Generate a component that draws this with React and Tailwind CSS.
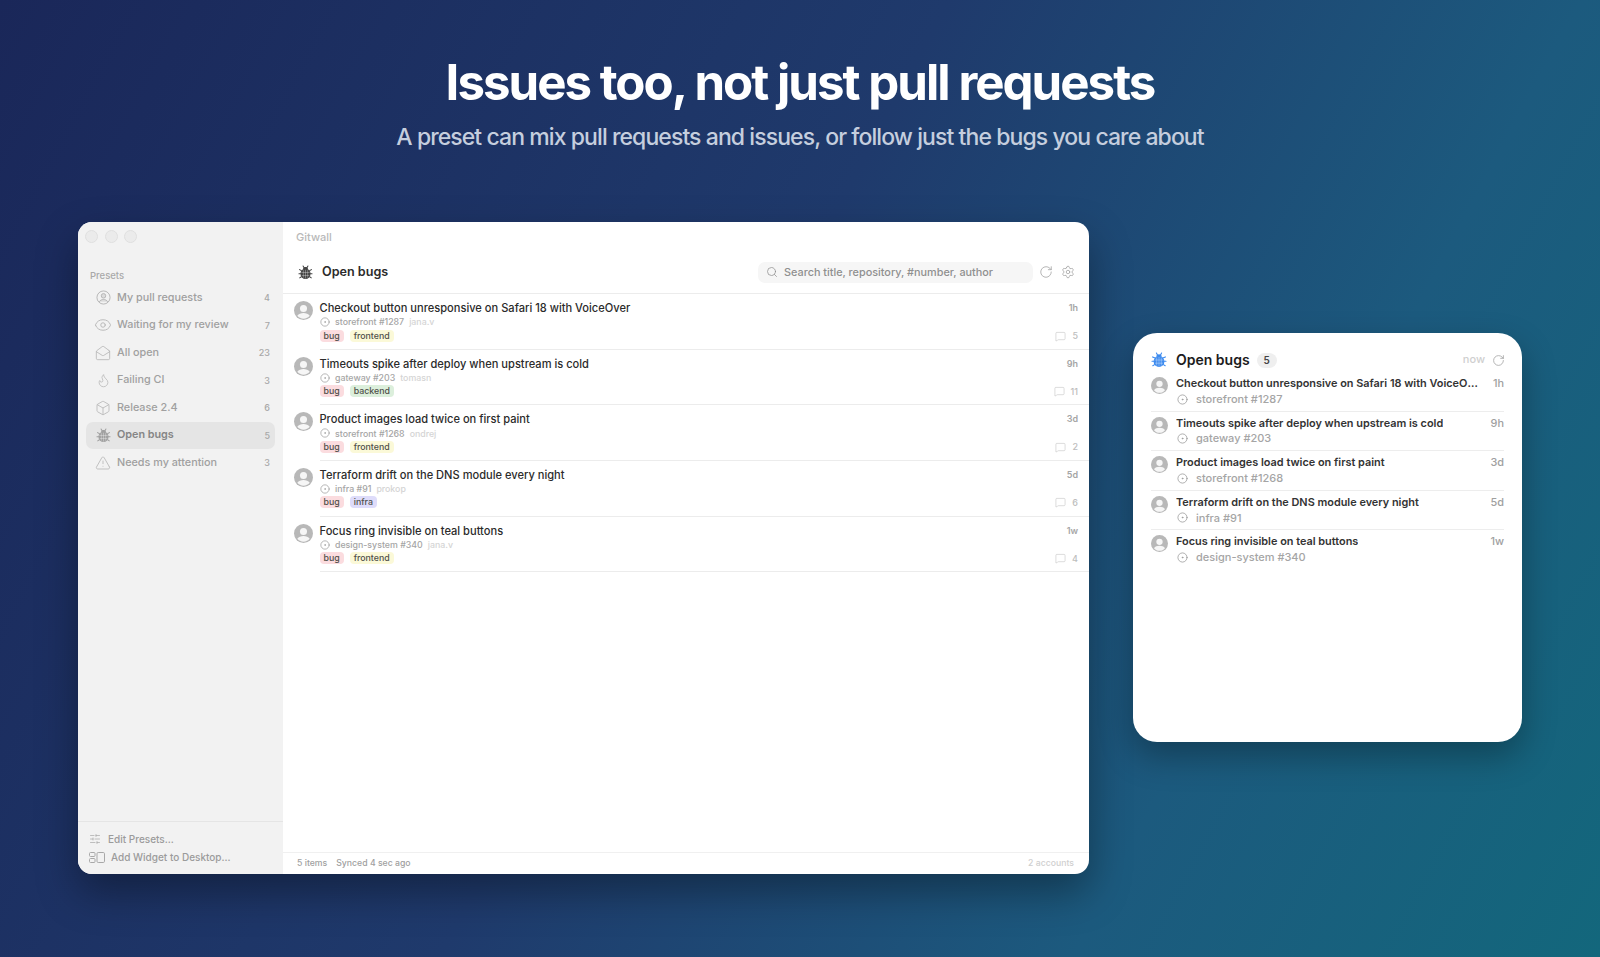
import {
  Box,
  CircleDot,
  Eye,
  Flame,
  MailOpen,
  MessageSquare,
  RotateCw,
  Search,
  Settings,
  SlidersHorizontal,
  TriangleAlert,
} from "lucide-react";

const issues = [
  { title: "Checkout button unresponsive on Safari 18 with VoiceOver", ref: "storefront #1287", author: "jana.v", time: "1h", comments: 5, tag: "frontend" },
  { title: "Timeouts spike after deploy when upstream is cold", ref: "gateway #203", author: "tomasn", time: "9h", comments: 11, tag: "backend" },
  { title: "Product images load twice on first paint", ref: "storefront #1268", author: "ondrej", time: "3d", comments: 2, tag: "frontend" },
  { title: "Terraform drift on the DNS module every night", ref: "infra #91", author: "prokop", time: "5d", comments: 6, tag: "infra" },
  { title: "Focus ring invisible on teal buttons", ref: "design-system #340", author: "jana.v", time: "1w", comments: 4, tag: "frontend" },
];

const tagStyles = {
  frontend: "bg-[#fbf9d8]",
  backend: "bg-[#dcefdc]",
  infra: "bg-[#dedcfa]",
};

const Avatar = ({ className }) => (
  <svg viewBox="0 0 20 20" className={className}>
    <defs>
      <clipPath id="avatar-clip">
        <circle cx="10" cy="10" r="10" />
      </clipPath>
    </defs>
    <circle cx="10" cy="10" r="10" fill="#b8b8b8" />
    <g clipPath="url(#avatar-clip)" fill="#f6f6f6">
      <circle cx="10" cy="8" r="3.7" />
      <path d="M3.5 15.6c1.4-2 3.8-2.9 6.5-2.9s5.100.9 6.500 2.900c-1.500 1.900-3.900 3-6.500 3s-5-1.100-6.500-3z" />
    </g>
  </svg>
);

const BugIcon = ({ className }) => (
  <svg viewBox="0 0 16 16" className={className} fill="currentColor" stroke="currentColor">
    <path fill="none" strokeWidth="1.100" strokeLinecap="round" d="M5.400 1l1.100 2M10.600 1L9.500 3M3.500 5.800L1.600 4.900M12.500 5.800l1.900-.9M3 9.300H1M13 9.300h2M3.600 12.600l-1.800 1.100M12.400 12.600l1.800 1.100" />
    <path stroke="none" d="M5.200 4.400C5.500 2.900 6.600 2.200 8 2.200s2.500.7 2.800 2.200z" />
    <ellipse cx="8" cy="9.400" rx="5.400" ry="5.600" stroke="none" />
    <path d="M8 5v9.500M3.500 8h9M4 11.200h8M5.700 5.500v8M10.300 5.500v8" stroke="#fff" strokeOpacity=".55" strokeWidth=".6" fill="none" />
  </svg>
);

const PersonIcon = ({ className }) => (
  <svg viewBox="0 0 16 16" fill="none" stroke="currentColor" strokeWidth="1" className={className}>
    <circle cx="8" cy="8" r="7" />
    <circle cx="8" cy="6.200" r="2.400" fill="currentColor" fillOpacity=".35" />
    <path d="M3.500 12.600c1-1.700 2.600-2.500 4.500-2.500s3.500.8 4.500 2.500" fill="currentColor" fillOpacity=".35" />
  </svg>
);

const WidgetIcon = ({ className }) => (
  <svg viewBox="0 0 16 11" fill="none" stroke="currentColor" strokeWidth="1" className={className}>
    <rect x=".5" y=".5" width="5.500" height="4" rx="1" />
    <rect x=".5" y="6.500" width="5.500" height="4" rx="1" />
    <rect x="8" y=".5" width="7.500" height="10" rx="1.200" />
  </svg>
);

const presets = [
  { icon: PersonIcon, label: "My pull requests", count: 4, size: "size-[15px]" },
  { icon: Eye, label: "Waiting for my review", count: 7, size: "size-[18px]" },
  { icon: MailOpen, label: "All open", count: 23, size: "size-[16px]" },
  { icon: Flame, label: "Failing CI", count: 3, size: "size-[15px]" },
  { icon: Box, label: "Release 2.4", count: 6, size: "size-[16px]" },
  { icon: BugIcon, label: "Open bugs", count: 5, size: "size-[15px]", active: true },
  { icon: TriangleAlert, label: "Needs my attention", count: 3, size: "size-[16px]" },
];

const Sidebar = () => (
  <aside className="flex w-[205px] shrink-0 flex-col bg-[#f2f2f2]">
    <div className="flex h-[28px] items-center gap-[6.500px] pl-[7px]">
      <span className="size-[13px] rounded-full border border-[#dfdfdf] bg-[#ebebeb]" />
      <span className="size-[13px] rounded-full border border-[#dfdfdf] bg-[#ebebeb]" />
      <span className="size-[13px] rounded-full border border-[#dfdfdf] bg-[#ebebeb]" />
    </div>
    <div className="mt-[20px] pl-[12px] text-[9.500px] leading-[12px] font-medium text-[#a9a9a9]">Presets</div>
    <nav className="mt-[2px] flex flex-col px-[8px]">
      {presets.map(({ icon: Icon, label, count, size, active }) => (
        <div
          key={label}
          className={`flex h-[27.500px] items-center rounded-[7px] pr-[5px] ${active ? "bg-[#e5e5e5]" : ""}`}
        >
          <span className={`flex w-[31px] shrink-0 items-center justify-center pl-[3px] ${active ? "text-[#a0a0a0]" : "text-[#b4b4b4]"}`}>
            <Icon className={size} strokeWidth={1.200} />
          </span>
          <span className={`flex-1 text-[10.800px] ${active ? "font-semibold text-[#858585]" : "font-medium text-[#a0a0a0]"}`}>
            {label}
          </span>
          <span className="text-[9px] font-medium text-[#a8a8a8]">{count}</span>
        </div>
      ))}
    </nav>
    <div className="mt-auto flex h-[53px] flex-col gap-[4px] border-t border-[#e5e5e5] pt-[10px] text-[10px] font-medium text-[#9b9b9b]">
      <div className="flex h-[14px] items-center pl-[11px]">
        <SlidersHorizontal className="size-[12px] text-[#a0a0a0]" strokeWidth={1.300} />
        <span className="ml-[7px]">Edit Presets...</span>
      </div>
      <div className="flex h-[14px] items-center pl-[11px]">
        <WidgetIcon className="h-[11px] w-[16px] text-[#a8a8a8]" />
        <span className="ml-[6px]">Add Widget to Desktop...</span>
      </div>
    </div>
  </aside>
);

const IssueRow = ({ title, ref: issueRef, author, time, comments, tag }) => (
  <div className="flex h-[55.670px] pl-[11px]">
    <Avatar className="mt-[7px] size-[19px] shrink-0" />
    <div className="ml-[6.500px] flex flex-1 justify-between border-b border-[#ececec] pr-[11px] pt-[7px]">
      <div className="min-w-0">
        <div className="h-[14px] text-[11.100px] leading-[14px] font-medium text-[#2b2b2b]">{title}</div>
        <div className="flex h-[14px] items-center text-[8.800px] font-medium text-[#a5a5a5]">
          <CircleDot className="size-[10px] text-[#8e8e8e]" strokeWidth={1.500} />
          <span className="ml-[5.500px]">{issueRef}</span>
          <span className="ml-[5px] text-[#d4d4d4]">{author}</span>
        </div>
        <div className="flex gap-[6px] pt-[0.500px] text-[8.800px] leading-[12px] font-medium text-[#50504a]">
          <span className="rounded-[4px] bg-[#fbdcdf] px-[4px]">bug</span>
          <span className={`rounded-[4px] px-[4px] ${tagStyles[tag]}`}>{tag}</span>
        </div>
      </div>
      <div className="flex flex-col items-end">
        <span className="text-[9px] leading-[14px] font-semibold text-[#a5a5a5]">{time}</span>
        <div className="mt-[15px] flex items-center gap-[6px] text-[9px] leading-[12px] font-medium text-[#bdbdbd]">
          <MessageSquare className="size-[11px] text-[#c4c4c4]" strokeWidth={1.300} />
          {comments}
        </div>
      </div>
    </div>
  </div>
);

const AppWindow = () => (
  <section className="flex h-[652px] w-[1011px] overflow-hidden rounded-[14px] bg-white shadow-[0_18px_40px_rgba(0,0,0,0.35)]">
    <Sidebar />
    <main className="flex min-w-0 flex-1 flex-col">
      <div className="flex h-[30px] items-center pl-[13px] text-[11px] font-medium text-[#b9b9b9]">Gitwall</div>
      <header className="flex h-[42px] items-center border-b border-[#ececec] pb-[1px] pl-[15px] pr-[14px]">
        <BugIcon className="size-[15px] text-[#444]" />
        <h2 className="ml-[9px] flex-1 text-[12.600px] font-semibold text-[#2b2b2b]">Open bugs</h2>
        <div className="flex h-[21px] w-[275px] items-center rounded-[7px] bg-[#f6f6f6] pl-[8px] text-[#8f8f8f]">
          <Search className="size-[12px]" strokeWidth={1.500} />
          <span className="ml-[6px] text-[10.850px] font-medium">Search title, repository, #number, author</span>
        </div>
        <RotateCw className="ml-[6px] size-[14px] text-[#a5a5a5]" strokeWidth={1.400} />
        <Settings className="ml-[8px] size-[14px] text-[#a5a5a5]" strokeWidth={1.400} />
      </header>
      <div className="flex-1">
        {issues.map((issue) => (
          <IssueRow key={issue.title} {...issue} />
        ))}
      </div>
      <footer className="flex h-[22px] items-center justify-between border-t border-[#f0f0f0] pl-[14px] pr-[15px] text-[8.700px] font-medium">
        <div className="flex gap-[9px] text-[#a0a0a0]">
          <span>5 items</span>
          <span>Synced 4 sec ago</span>
        </div>
        <span className="text-[#cfcfcf]">2 accounts</span>
      </footer>
    </main>
  </section>
);

const Widget = () => (
  <section className="mt-[111px] h-[409px] w-[389px] rounded-[24px] bg-white pl-[18px] pr-[18px] shadow-[0_14px_34px_rgba(0,0,0,0.3)]">
    <header className="flex h-[39px] items-end pb-[3px]">
      <BugIcon className="mb-[1px] size-[16px] text-[#3d8bef]" />
      <h3 className="ml-[9px] text-[14px] leading-[18px] font-semibold text-[#1c1c1c]">Open bugs</h3>
      <span className="mb-[1px] ml-[7px] flex h-[15px] w-[20px] items-center justify-center rounded-full bg-[#efefef] text-[10px] font-semibold text-[#444]">5</span>
      <span className="ml-auto mb-[2px] text-[11px] font-medium text-[#cfcfcf]">now</span>
      <RotateCw className="mb-[2px] -mr-[1px] ml-[7px] size-[13px] text-[#a5a5a5]" strokeWidth={1.500} />
    </header>
    {issues.map((issue, i) => (
      <div key={issue.title} className={`flex h-[39.600px] ${i < issues.length - 1 ? "border-b border-[#ededed]" : ""}`}>
        <Avatar className="mt-[5px] size-[17px] shrink-0" />
        <div className="ml-[8px] min-w-0 flex-1 pt-[3px]">
          <div className="flex h-[16px] items-center justify-between text-[10.900px] leading-[16px]">
            <span className="min-w-0 truncate font-semibold text-[#333]">{issue.title}</span>
            <span className="ml-[14px] shrink-0 font-medium text-[#a0a0a0]">{issue.time}</span>
          </div>
          <div className="flex h-[16px] items-center text-[11px] font-medium text-[#a5a5a5]">
            <CircleDot className="ml-[1px] size-[11px] text-[#8e8e8e]" strokeWidth={1.500} />
            <span className="ml-[8px]">{issue.ref}</span>
          </div>
        </div>
      </div>
    ))}
  </section>
);

const App = () => (
  <div className="h-[957px] w-[1600px] overflow-hidden bg-[#1c2f64] bg-linear-[118deg,#1a2759_0%,#1f3a6c_45%,#1c5a7e_75%,#13677c_100%] font-['Inter',sans-serif]">
    <div className="flex h-[222px] flex-col items-center pt-[49px]">
      <h1 className="text-[49.200px] leading-[66px] font-bold tracking-[-0.04em] text-white">Issues too, not just pull requests</h1>
      <p className="mt-[7px] text-[23px] leading-[30px] font-medium tracking-[-0.04em] text-[#c5cede]">
        A preset can mix pull requests and issues, or follow just the bugs you care about
      </p>
    </div>
    <div className="flex items-start justify-between px-[78px]">
      <AppWindow />
      <Widget />
    </div>
  </div>
);

export default App;
